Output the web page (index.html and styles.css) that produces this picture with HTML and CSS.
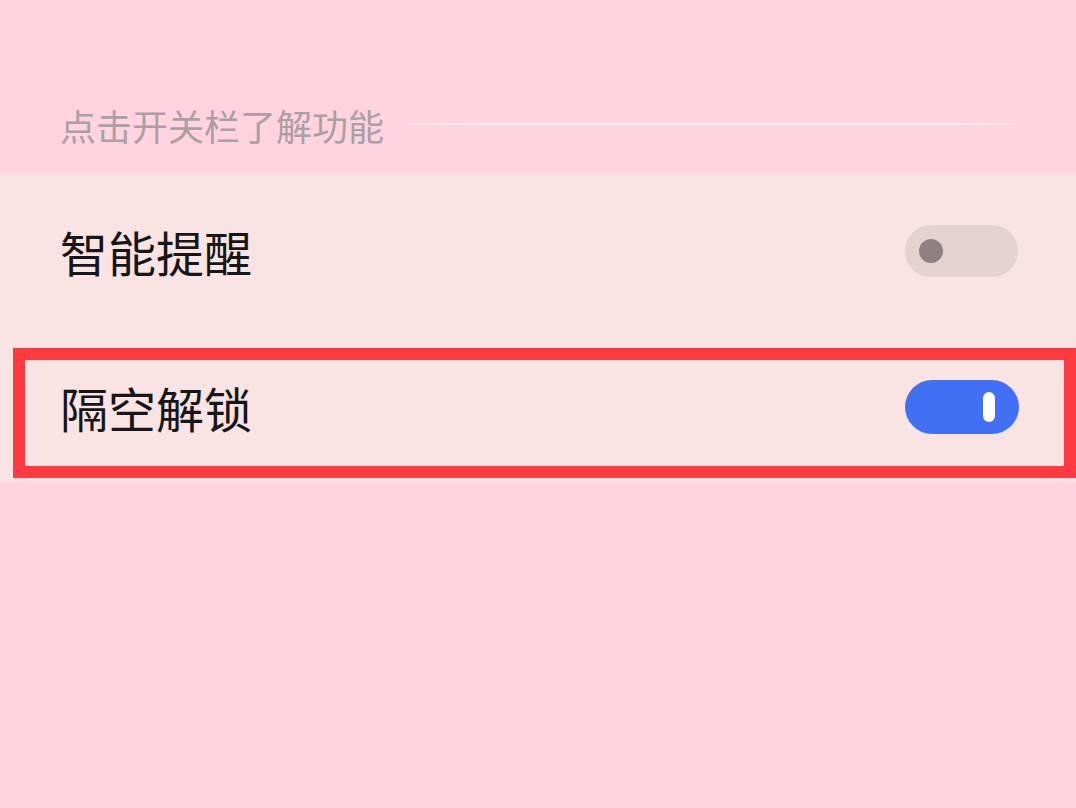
FILE: index.html
```html
<!DOCTYPE html>
<html lang="zh-CN">
<head>
    <meta charset="UTF-8">
    <meta name="viewport" content="width=device-width, initial-scale=1.0">
    <title>隔空解锁</title>
    <link rel="stylesheet" href="styles.css">
</head>
<body>
    <div class="section-head">
        <span class="section-title">点击开关栏了解功能</span>
        <span class="section-line"></span>
    </div>
    <div class="card">
        <div class="row">
            <span class="row-label">智能提醒</span>
            <span class="switch"><span class="knob"></span></span>
        </div>
        <div class="row row-marked">
            <span class="row-label">隔空解锁</span>
            <span class="switch switch-on"><span class="knob"></span></span>
        </div>
    </div>
</body>
</html>
```

FILE: styles.css
```css
body { margin: 0; background: #ffd3df; font-family: "Noto Sans CJK SC", "Noto Sans", sans-serif; }
.section-head { height: 173px; box-sizing: border-box; padding: 104px 61px 0 60px; display: flex; align-items: flex-start; }
.section-title { font-size: 36px; line-height: 42px; color: #ab9fa4; }
.section-line { flex: 1; height: 2px; margin: 19px 0 0 23px; background: linear-gradient(to right, rgba(255,246,248,0.4), #fff3f5 10%, #fff3f5 90%, rgba(255,246,248,0.4)); }
.card { background: #fae3e3; padding-bottom: 4px; }
.row { display: flex; align-items: center; justify-content: space-between; height: 175px; box-sizing: border-box; padding: 0 58px 20px 60px; }
.row-label { font-size: 48px; line-height: 56px; color: #161616; }
.row-marked { height: 130px; margin-left: 13px; border: 12px solid #fc3a3f; padding: 0 45px 12px 35px; }
.switch { width: 113px; height: 52px; border-radius: 26px; background: #e6d1d1; display: flex; align-items: center; padding-left: 14px; box-sizing: border-box; }
.switch .knob { width: 24px; height: 24px; border-radius: 50%; background: #8f8181; }
.switch-on { width: 114px; height: 54px; border-radius: 27px; background: #4170f5; justify-content: flex-end; padding: 0 24px 0 0; }
.switch-on .knob { width: 12px; height: 30px; border-radius: 6px; background: #fff; }
```
